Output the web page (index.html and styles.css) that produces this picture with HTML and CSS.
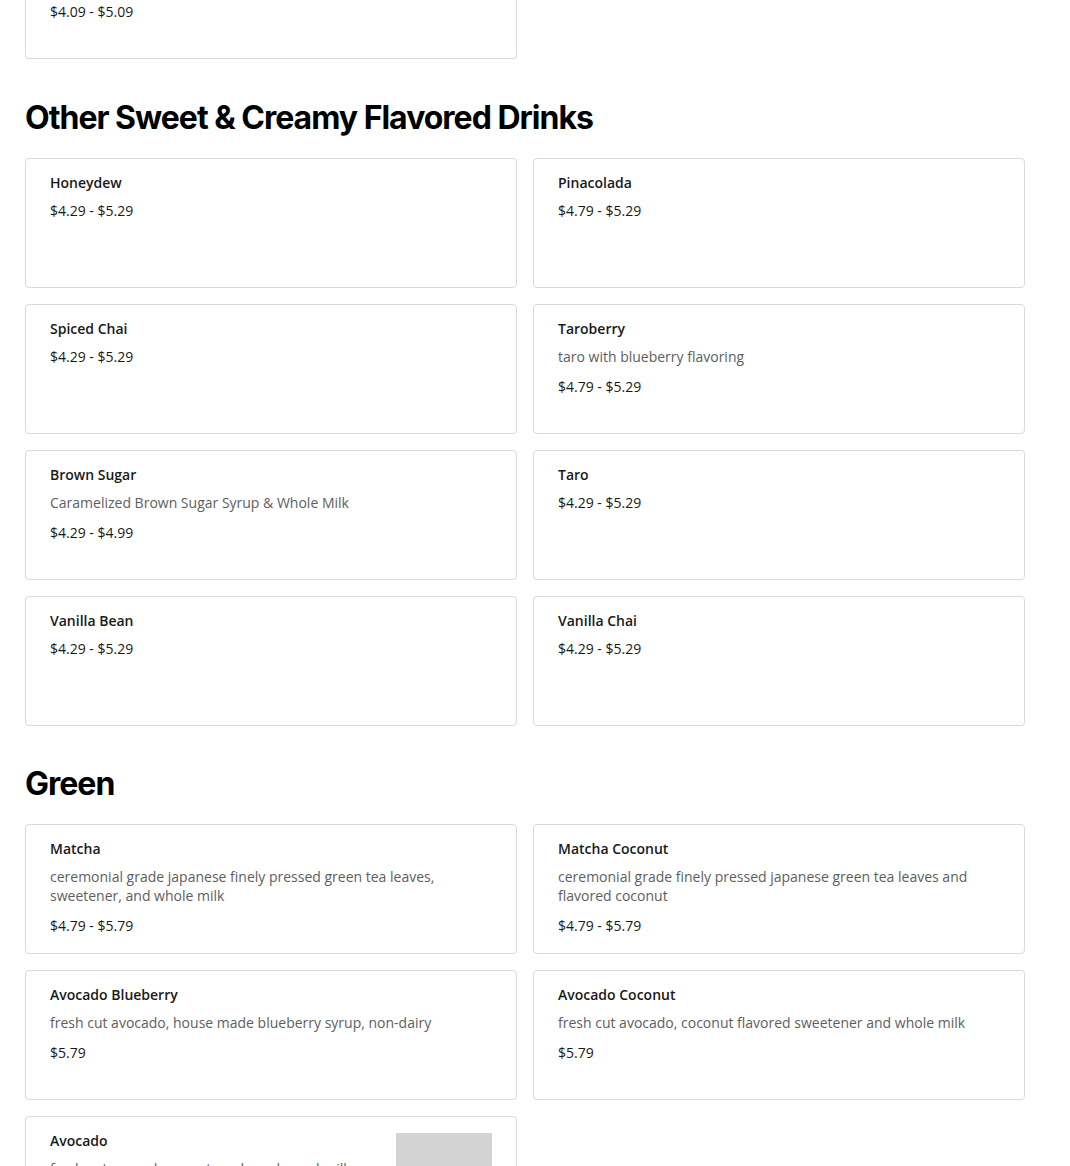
FILE: index.html
```html
<!DOCTYPE html>
<html lang="en">
<head>
<meta charset="utf-8">
<title>Menu</title>
<link rel="stylesheet" href="styles.css">
</head>
<body>
<main class="menu">
  <section class="section section-top">
    <div class="grid">
      <div class="card card-cut">
        <div class="price">$4.09 - $5.09</div>
      </div>
    </div>
  </section>

  <section class="section">
    <h2 class="section-title">Other Sweet &amp; Creamy Flavored Drinks</h2>
    <div class="grid">
      <div class="card"><div class="info"><div class="name">Honeydew</div><div class="price">$4.29 - $5.29</div></div></div>
      <div class="card"><div class="info"><div class="name">Pinacolada</div><div class="price">$4.79 - $5.29</div></div></div>
      <div class="card"><div class="info"><div class="name">Spiced Chai</div><div class="price">$4.29 - $5.29</div></div></div>
      <div class="card"><div class="info"><div class="name">Taroberry</div><div class="desc">taro with blueberry flavoring</div><div class="price">$4.79 - $5.29</div></div></div>
      <div class="card"><div class="info"><div class="name">Brown Sugar</div><div class="desc">Caramelized Brown Sugar Syrup &amp; Whole Milk</div><div class="price">$4.29 - $4.99</div></div></div>
      <div class="card"><div class="info"><div class="name">Taro</div><div class="price">$4.29 - $5.29</div></div></div>
      <div class="card"><div class="info"><div class="name">Vanilla Bean</div><div class="price">$4.29 - $5.29</div></div></div>
      <div class="card"><div class="info"><div class="name">Vanilla Chai</div><div class="price">$4.29 - $5.29</div></div></div>
    </div>
  </section>

  <section class="section">
    <h2 class="section-title">Green</h2>
    <div class="grid">
      <div class="card"><div class="info"><div class="name">Matcha</div><div class="desc">ceremonial grade japanese finely pressed green tea leaves, sweetener, and whole milk</div><div class="price">$4.79 - $5.79</div></div></div>
      <div class="card"><div class="info"><div class="name">Matcha Coconut</div><div class="desc">ceremonial grade finely pressed japanese green tea leaves and flavored coconut</div><div class="price">$4.79 - $5.79</div></div></div>
      <div class="card"><div class="info"><div class="name">Avocado Blueberry</div><div class="desc">fresh cut avocado, house made blueberry syrup, non-dairy</div><div class="price">$5.79</div></div></div>
      <div class="card"><div class="info"><div class="name">Avocado Coconut</div><div class="desc">fresh cut avocado, coconut flavored sweetener and whole milk</div><div class="price">$5.79</div></div></div>
      <div class="card card-img"><div class="info"><div class="name">Avocado</div><div class="desc">fresh cut avocado, sweetened condensed milk, and whole milk</div><div class="price">$5.79</div></div><div class="thumb"></div></div>
    </div>
  </section>
</main>
</body>
</html>
```

FILE: styles.css
```css
html, body {
  margin: 0;
  padding: 0;
  background: #ffffff;
}

body {
  font-family: "Open Sans", "Liberation Sans", Arial, sans-serif;
  color: #191919;
  overflow: hidden;
}

.menu {
  width: 1000px;
  margin-left: 25px;
}

.section {
  margin-bottom: 38px;
}

.section-top {
  margin-bottom: 39px;
}

.section-title {
  font-family: "Inter", "Liberation Sans", Arial, sans-serif;
  font-weight: 700;
  font-size: 32px;
  line-height: 40px;
  margin: 0 0 20px 0;
  color: #000000;
  letter-spacing: -1px;
}

.grid {
  display: grid;
  grid-template-columns: 492px 492px;
  gap: 16px;
}

.card {
  box-sizing: border-box;
  min-height: 130px;
  border: 1px solid #dadada;
  border-radius: 4px;
  padding: 16px 24px;
  display: flex;
  gap: 20px;
  background: #ffffff;
}

.card-cut {
  min-height: 0;
  height: 59px;
  border-top: none;
  border-radius: 0 0 4px 4px;
  padding-top: 2px;
}

.card-cut .price {
  margin-top: 0;
}

.info {
  flex: 1;
  min-width: 0;
}

.name {
  font-size: 14px;
  font-weight: 600;
  line-height: 16px;
  color: #191919;
}

.desc {
  margin-top: 10px;
  font-size: 14px;
  line-height: 19px;
  color: #5e5e5e;
}

.price {
  margin-top: 10px;
  font-size: 14px;
  line-height: 20px;
  color: #191919;
}

.desc + .price {
  margin-top: 11px;
}

.thumb {
  flex: none;
  width: 96px;
  height: 96px;
  background: #d3d3d3;
}
```
